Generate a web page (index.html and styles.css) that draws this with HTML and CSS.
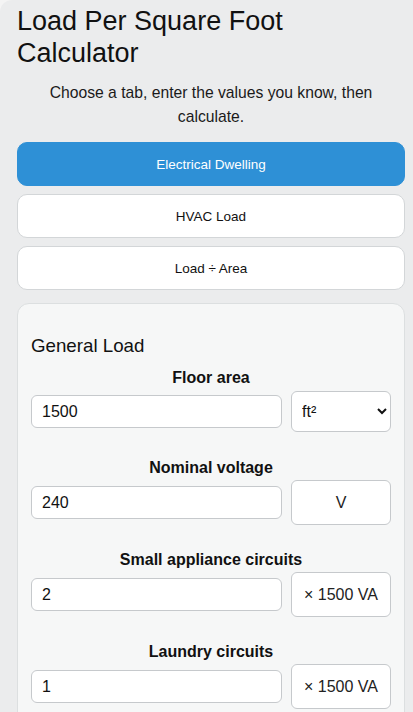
FILE: index.html
```html
<!DOCTYPE html>
<html lang="en">
<head>
<meta charset="utf-8">
<title>Load Per Square Foot Calculator</title>
<link rel="stylesheet" href="styles.css">
</head>
<body>
<div class="page">
  <h1 class="title">Load Per Square Foot Calculator</h1>
  <p class="intro">Choose a tab, enter the values you know, then calculate.</p>
  <div class="tabs">
    <button class="tab tab-active" type="button">Electrical Dwelling</button>
    <button class="tab" type="button">HVAC Load</button>
    <button class="tab" type="button">Load ÷ Area</button>
  </div>
  <section class="card">
    <h3 class="card-title">General Load</h3>
    <div class="field">
      <label class="field-label" for="area">Floor area</label>
      <div class="field-row">
        <input class="field-input" id="area" type="text" value="1500">
        <select class="field-select">
          <option>ft²</option>
          <option>m²</option>
        </select>
      </div>
    </div>
    <div class="field">
      <label class="field-label" for="volt">Nominal voltage</label>
      <div class="field-row">
        <input class="field-input" id="volt" type="text" value="240">
        <div class="field-unit">V</div>
      </div>
    </div>
    <div class="field">
      <label class="field-label" for="sac">Small appliance circuits</label>
      <div class="field-row">
        <input class="field-input" id="sac" type="text" value="2">
        <div class="field-unit">× 1500 VA</div>
      </div>
    </div>
    <div class="field">
      <label class="field-label" for="lc">Laundry circuits</label>
      <div class="field-row">
        <input class="field-input" id="lc" type="text" value="1">
        <div class="field-unit">× 1500 VA</div>
      </div>
    </div>
  </section>
</div>
</body>
</html>
```
FILE: styles.css
```css
html, body {
  margin: 0;
  padding: 0;
  background: #f4f4f4;
}
body {
  font-family: "Liberation Sans", Arial, sans-serif;
  color: #111;
}
.page {
  background: #ebeced;
  border-top-left-radius: 12px;
  padding: 5px 8px 40px 17px;
  min-height: 700px;
}
.title {
  margin: 0;
  font-size: 27px;
  line-height: 32px;
  font-weight: normal;
}
.intro {
  margin: 12px 20px 13px;
  font-size: 15.7px;
  line-height: 24px;
  text-align: center;
  color: #1a1a1a;
}
.tabs {
  display: flex;
  flex-direction: column;
  gap: 8px;
}
.tab {
  height: 44px;
  border: 1px solid #d3d6d8;
  border-radius: 10px;
  background: #fff;
  font-family: inherit;
  font-size: 13.5px;
  color: #111;
  padding: 0;
}
.tab-active {
  background: #2e90d6;
  border-color: #2e90d6;
  color: #fff;
}
.card {
  margin-top: 13px;
  background: #f6f7f7;
  border: 1px solid #dcdfe0;
  border-radius: 12px;
  padding: 12px 13px 20px;
}
.card-title {
  margin: 19px 0 12px;
  font-size: 18.72px;
  font-weight: normal;
}
.field {
  margin-bottom: 26px;
}
.field-label {
  display: block;
  text-align: center;
  font-weight: bold;
  font-size: 16px;
  margin-bottom: 3px;
}
.field-row {
  display: grid;
  grid-template-columns: 1fr 100px;
  gap: 9px;
  align-items: center;
  min-height: 43px;
}
.field-input {
  box-sizing: border-box;
  width: 100%;
  height: 33px;
  border: 1px solid #c6c9cc;
  border-radius: 6px;
  background: #fff;
  font-family: inherit;
  font-size: 16px;
  color: #111;
  padding: 0 10px;
}
.field-select {
  box-sizing: border-box;
  width: 100%;
  height: 41px;
  border: 1px solid #c6c9cc;
  border-radius: 6px;
  background: #fff;
  font-family: inherit;
  font-size: 16px;
  color: #111;
  padding: 0 6px;
}
.field-unit {
  box-sizing: border-box;
  height: 45px;
  border: 1px solid #c6c9cc;
  border-radius: 6px;
  background: #fff;
  font-size: 16px;
  display: flex;
  align-items: center;
  justify-content: center;
  color: #222;
}
```
